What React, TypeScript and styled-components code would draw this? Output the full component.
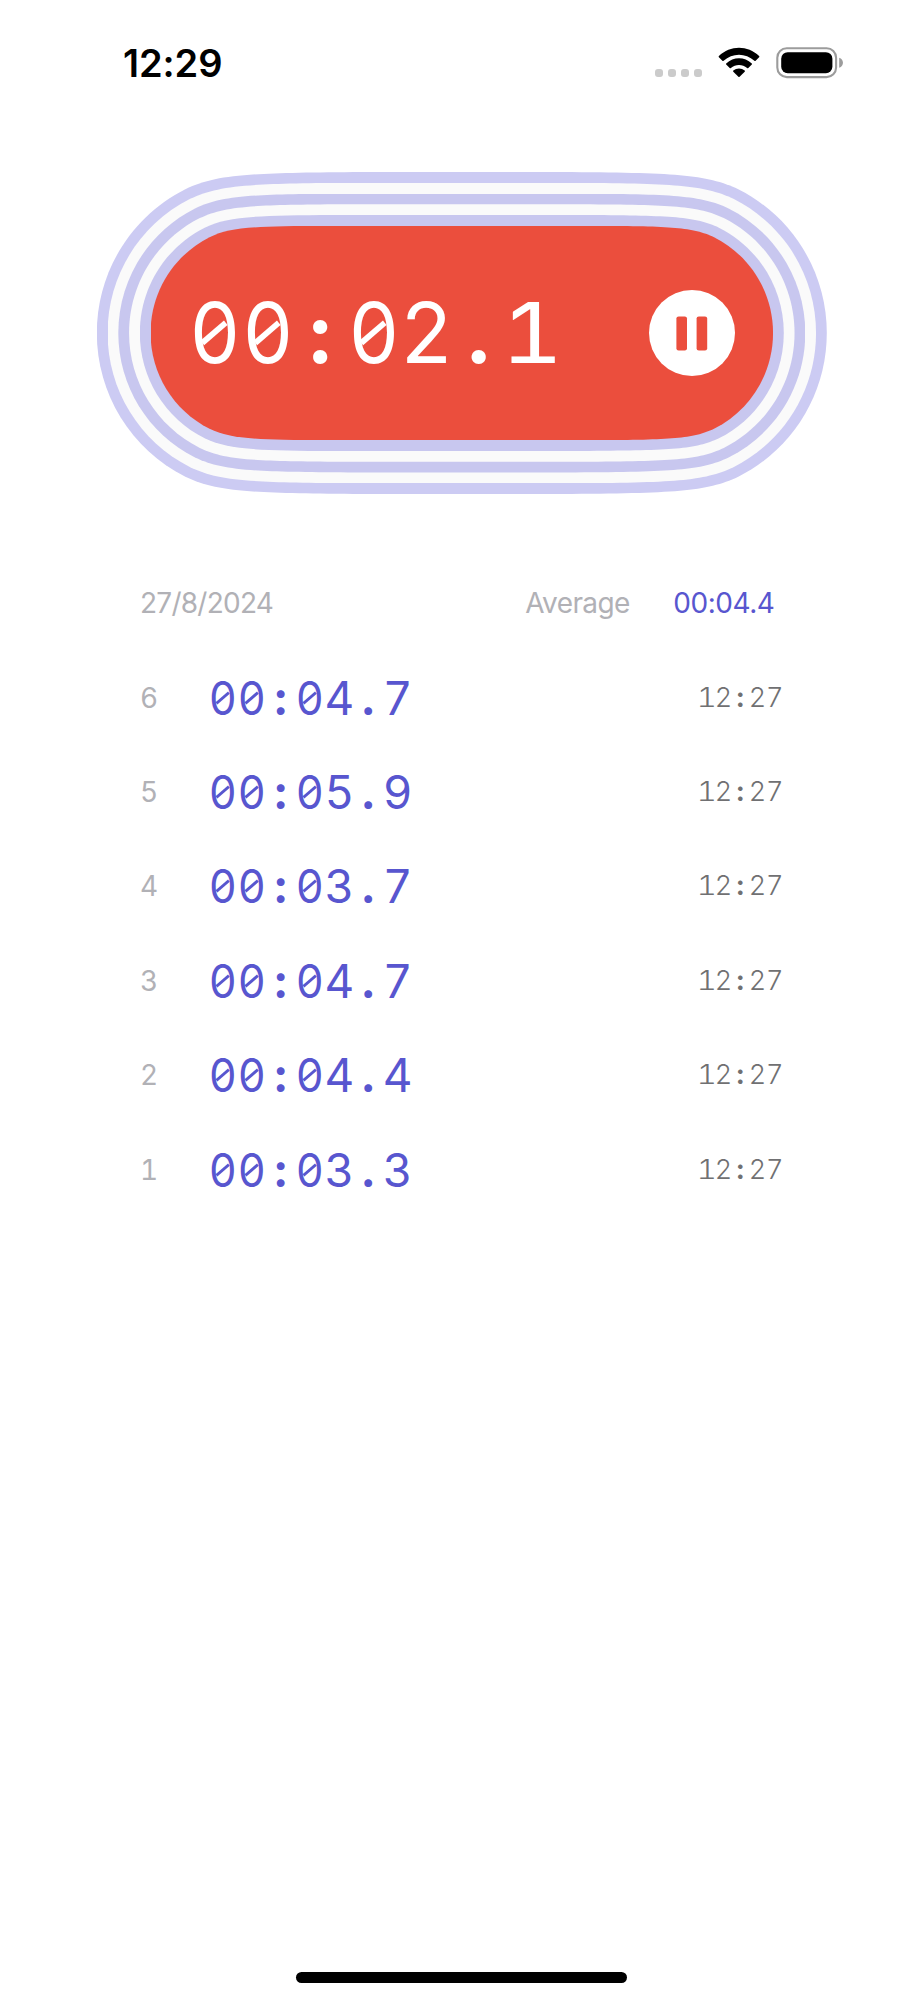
import styled, { createGlobalStyle } from 'styled-components'

interface Lap {
  index: number
  duration: string
  time: string
}

const laps: Lap[] = [
  { index: 6, duration: '00:04.7', time: '12:27' },
  { index: 5, duration: '00:05.9', time: '12:27' },
  { index: 4, duration: '00:03.7', time: '12:27' },
  { index: 3, duration: '00:04.7', time: '12:27' },
  { index: 2, duration: '00:04.4', time: '12:27' },
  { index: 1, duration: '00:03.3', time: '12:27' }
]

const STEP = 10.75
const PILL_WIDTH = 622.5
const PILL_HEIGHT = 214.5
const ringColors = ['#cccbf3', '#fafafa', '#c8c7ef', '#fafafa', '#c8c7ef']

// capsule whose round ends ease slowly into the straight edges
function capsule(w: number, h: number) {
  const r = h / 2
  const p = (x: number, y: number) => `${(x * r).toFixed(2)} ${(y * r).toFixed(2)}`
  const q = (x: number, y: number) => `${(w - x * r).toFixed(2)} ${(y * r).toFixed(2)}`
  return [
    `M${p(1.65, 0)}`,
    `L${q(1.65, 0)}`,
    `C${q(0.95, 0.005)} ${q(0.75, 0.013)} ${q(0.55, 0.107)}`,
    `C${q(0.212, 0.277)} ${q(0, 0.622)} ${q(0, 1)}`,
    `C${q(0, 1.378)} ${q(0.212, 1.723)} ${q(0.55, 1.893)}`,
    `C${q(0.75, 1.987)} ${q(0.95, 1.995)} ${q(1.65, 2)}`,
    `L${p(1.65, 2)}`,
    `C${p(0.95, 1.995)} ${p(0.75, 1.987)} ${p(0.55, 1.893)}`,
    `C${p(0.212, 1.723)} ${p(0, 1.378)} ${p(0, 1)}`,
    `C${p(0, 0.622)} ${p(0.212, 0.277)} ${p(0.55, 0.107)}`,
    `C${p(0.75, 0.013)} ${p(0.95, 0.005)} ${p(1.65, 0)}Z`
  ].join('')
}

function MonoDigits({ value }: { value: string }) {
  return (
    <>
      {value.split('').map((char, i) => {
        if (char === '0') return <Zero key={i}>{char}</Zero>
        if (char === ':' || char === '.') return <Mark key={i}>{char}</Mark>
        return (
          <Digit key={i} $stretch={char === '1' ? 1.15 : 1}>
            {char}
          </Digit>
        )
      })}
    </>
  )
}

function StatusIcons() {
  return (
    <IconRow>
      <Dots>
        <i />
        <i />
        <i />
        <i />
      </Dots>
      <svg width='42' height='31' viewBox='0 0 42 31'>
        <path d='M.9 9.1C12.3-2 29.7-2 41.1 9.1Q41.6 9.7 41.1 10.3L37.6 13.7Q37 14.2 36.4 13.7C27.6 5.6 14.4 5.6 5.6 13.7Q5 14.2 4.4 13.7L.9 10.3Q.4 9.7.9 9.1Z' />
        <path d='M8.2 16.4C15.5 9.4 26.5 9.4 33.8 16.4Q34.3 17 33.8 17.6L30.3 21Q29.7 21.5 29.1 21C24.6 16.9 17.4 16.9 12.9 21Q12.3 21.5 11.7 21L8.2 17.6Q7.7 17 8.2 16.4Z' />
        <path d='M15.3 23.6C18.6 20.7 23.4 20.7 26.7 23.6Q27.2 24.2 26.7 24.8L21.6 29.7Q21 30.2 20.4 29.7L15.3 24.8Q14.8 24.2 15.3 23.6Z' />
      </svg>
      <svg width='68' height='32' viewBox='0 0 68 32'>
        <rect x='1.3' y='1.3' width='58.8' height='28.8' rx='9.5' fill='none' stroke='#9c9c9c' strokeWidth='2.1' />
        <rect x='5.2' y='5.2' width='51.2' height='21' rx='6.5' />
        <path d='M63.2 10.7C68.2 12.3 68.2 19.2 63.2 20.8Z' fill='#9c9c9c' />
      </svg>
    </IconRow>
  )
}

function LapRow({ index, duration, time }: Lap) {
  return (
    <Row>
      <LapIndex>{index}</LapIndex>
      <LapDuration>
        <MonoDigits value={duration} />
      </LapDuration>
      <LapTime>
        <MonoDigits value={time} />
      </LapTime>
    </Row>
  )
}

export default function App() {
  const pill = (
    <Pill>
      <Elapsed>
        <MonoDigits value='00:02.1' />
      </Elapsed>
      <PauseButton aria-label='Pause'>
        <svg width='32' height='35' viewBox='0 0 32 35'>
          <rect x='.4' y='.4' width='10.6' height='34' rx='2.2' />
          <rect x='20.6' y='.4' width='10.6' height='34' rx='2.2' />
        </svg>
      </PauseButton>
    </Pill>
  )

  return (
    <Screen>
      <GlobalStyle />
      <StatusBar>
        <Clock>12:29</Clock>
        <StatusIcons />
      </StatusBar>
      <Timer>
        {ringColors.reduceRight(
          (children, color, i) => (
            <Ring $color={color} $grow={2 * STEP * (ringColors.length - i)}>
              {children}
            </Ring>
          ),
          pill
        )}
      </Timer>
      <Summary>
        <DateLabel>27/8/2024</DateLabel>
        <Average>
          <Label>Average</Label>
          <AverageValue>00:04.4</AverageValue>
        </Average>
      </Summary>
      <LapList>
        {laps.map((lap) => (
          <LapRow key={lap.index} {...lap} />
        ))}
      </LapList>
      <HomeIndicator />
    </Screen>
  )
}

const GlobalStyle = createGlobalStyle`
  body {
    margin: 0;
    background: #fff;
  }
`

const Screen = styled.main`
  box-sizing: border-box;
  width: 923px;
  height: 2000px;
  display: flex;
  flex-direction: column;
  background: #fff;
  font-family: Inter, sans-serif;
  overflow: hidden;
`

const StatusBar = styled.header`
  box-sizing: border-box;
  height: 172px;
  padding: 40px 79px 0 123px;
  display: flex;
  align-items: flex-start;
  justify-content: space-between;
`

const Clock = styled.div`
  font-size: 38px;
  line-height: 46px;
  font-weight: 600;
  letter-spacing: -0.1px;
`

const IconRow = styled.div`
  display: flex;
  align-items: flex-start;
  padding-top: 6.5px;
  gap: 16px;
`

const Dots = styled.div`
  display: flex;
  gap: 4.6px;
  padding-top: 22px;

  i {
    width: 8.4px;
    height: 8.4px;
    border-radius: 3px;
    background: #cbcbcb;
  }
`

const Timer = styled.section`
  display: flex;
  padding-left: 96.8px;
`

const Ring = styled.div<{ $color: string; $grow: number }>`
  box-sizing: border-box;
  width: ${({ $grow }) => PILL_WIDTH + $grow}px;
  height: ${({ $grow }) => PILL_HEIGHT + $grow}px;
  padding: ${STEP}px;
  background: ${({ $color }) => $color};
  clip-path: path('${({ $grow }) => capsule(PILL_WIDTH + $grow, PILL_HEIGHT + $grow)}');
`

const Pill = styled.div`
  box-sizing: border-box;
  width: ${PILL_WIDTH}px;
  height: ${PILL_HEIGHT}px;
  padding: 0 38.5px;
  display: flex;
  align-items: center;
  justify-content: space-between;
  background: #eb4e3d;
  clip-path: path('${capsule(PILL_WIDTH, PILL_HEIGHT)}');
`

const Digit = styled.span<{ $stretch?: number }>`
  display: inline-block;
  width: 0.633em;
  text-align: center;
  font-feature-settings: 'tnum';
  transform: scaleX(${({ $stretch = 1 }) => $stretch});
`

const Mark = styled(Digit)`
  font-weight: 700;
  font-feature-settings: 'calt' 0;
`

// the slash stays inside the bowl of the zero
const Zero = styled(Digit)`
  position: relative;
  transform: scaleX(0.94);

  &::after {
    content: '';
    position: absolute;
    left: 50%;
    top: 50%;
    width: 0.38em;
    height: 0.075em;
    background: currentColor;
    transform: translate(-50%, -50%) rotate(-39deg);
  }
`

const Elapsed = styled.div`
  margin-left: -1px;
  font-size: 83.5px;
  line-height: 100px;
  color: #fff;
`

const PauseButton = styled.button`
  width: 86px;
  height: 86px;
  padding: 0;
  border: 0;
  border-radius: 50%;
  display: flex;
  align-items: center;
  justify-content: center;
  background: #fff;
  fill: #eb4e3d;
`

const Summary = styled.div`
  margin-top: 92px;
  padding: 0 148.5px 0 140px;
  display: flex;
  justify-content: space-between;
`

const Average = styled.div`
  display: flex;
  gap: 43.5px;
`

const Label = styled.span`
  font-size: 28px;
  line-height: 34px;
  letter-spacing: -0.6px;
  color: #b1b1b6;
`

const DateLabel = styled(Label)`
  letter-spacing: -0.75px;
`

const AverageValue = styled(Label)`
  letter-spacing: -0.45px;
  color: #5856cf;
`

const LapList = styled.div`
  margin-top: 30.5px;
  padding: 0 140px 0 140px;
`

const Row = styled.div`
  height: 94.4px;
  display: flex;
  align-items: center;
`

const LapIndex = styled.div`
  width: 68px;
  font-size: 28px;
  font-feature-settings: 'tnum';
  color: #b1b1b6;
`

const LapDuration = styled.div`
  flex: 1;
  font-size: 46px;
  line-height: 56px;
  color: #5856cf;
`

const LapTime = styled.div`
  font-size: 27px;
  font-weight: 300;
  line-height: 34px;
  color: #707072;
`

const HomeIndicator = styled.div`
  width: 330.5px;
  height: 11px;
  margin: auto auto 17px;
  border-radius: 6px;
  background: #000;
`
